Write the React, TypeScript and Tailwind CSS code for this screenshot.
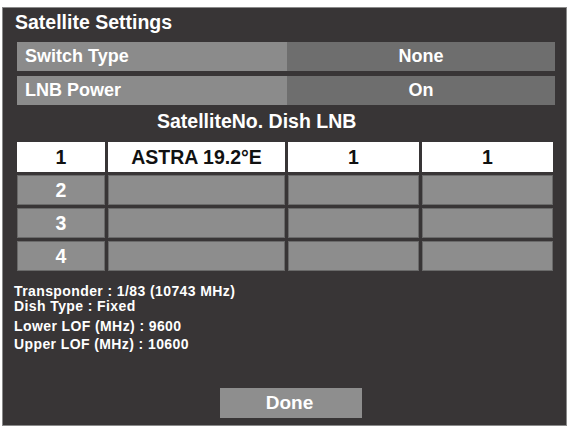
const font = { fontFamily: '"Liberation Sans", Arial, Helvetica, sans-serif' };

type Cell = { text: string; active?: boolean };

const rows: Cell[][] = [
  [{ text: "1", active: true }, { text: "ASTRA 19.2°E", active: true }, { text: "1", active: true }, { text: "1", active: true }],
  [{ text: "2" }, { text: "" }, { text: "" }, { text: "" }],
  [{ text: "3" }, { text: "" }, { text: "" }, { text: "" }],
  [{ text: "4" }, { text: "" }, { text: "" }, { text: "" }]
];

function SettingRow({ label, value }: { label: string; value: string }) {
  return (
    <div className="flex h-[29px] w-[538px] text-[18px] font-bold text-white leading-[29px]">
      <div className="w-[270px] bg-[#8b8b8b] pl-[8px]">{label}</div>
      <div className="flex-1 bg-[#6e6e6e] text-center">{value}</div>
    </div>
  );
}

export default function App() {
  return (
    <div className="h-[428px] w-[570px] bg-white pl-[2px] pt-[7px]" style={font}>
      <div className="flex h-[419px] w-[565px] flex-col border border-[#8a8a8a] bg-[#383536] px-[13px] pt-[3px] pb-[7px]">
        <div className="-ml-[1px] text-[19.5px] leading-[22px] font-bold text-white">
          Satellite Settings
        </div>

        <div className="mt-[9px] flex flex-col gap-[5px] pl-[1px]">
          <SettingRow label="Switch Type" value="None" />
          <SettingRow label="LNB Power" value="On" />
        </div>

        <div className="mt-[5px] pl-[141px] text-[19.5px] leading-[22px] font-bold text-white">
          SatelliteNo. Dish LNB
        </div>

        <div className="mt-[10px] grid grid-cols-[88px_177px_131px_131px] gap-x-[3px] gap-y-[3px] pl-[1px]">
          {rows.map((row, ri) =>
            row.map((cell, ci) => (
              <div
                key={`${ri}-${ci}`}
                className={
                  cell.active
                    ? "h-[30px] bg-white text-center text-[19.5px] leading-[30px] font-bold text-[#111]"
                    : "h-[30px] border border-[#6a6a6a] bg-[#8d8d8d] text-center text-[19.5px] leading-[28px] font-bold text-white"
                }
              >
                {cell.text}
              </div>
            ))
          )}
        </div>

        <div className="mt-[13px] -ml-[2px] text-[14px] font-bold tracking-[0.4px] text-white">
          <div className="leading-[14.5px]">Transponder : 1/83 (10743 MHz)</div>
          <div className="leading-[14.5px]">Dish Type : Fixed</div>
          <div className="mt-[4px] leading-[18px]">Lower LOF (MHz) : 9600</div>
          <div className="leading-[18px]">Upper LOF (MHz) : 10600</div>
        </div>

        <div className="mt-auto ml-[204px] h-[30px] w-[142px] bg-[#8e8e8e] pr-[3px] text-center text-[19px] leading-[30px] font-bold text-white">
          Done
        </div>
      </div>
    </div>
  );
}
